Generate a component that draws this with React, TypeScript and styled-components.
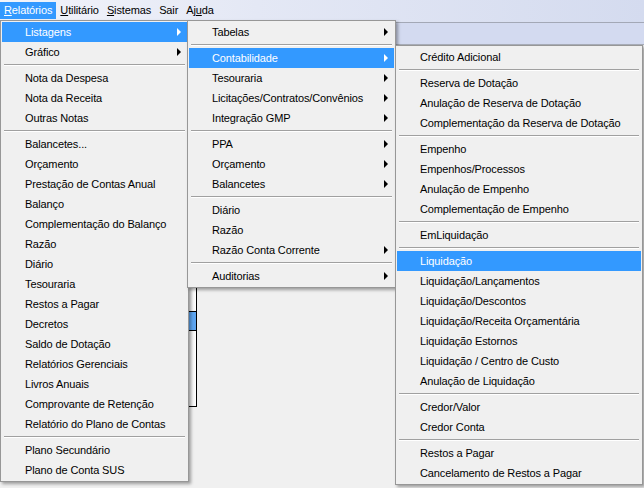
import styled, { createGlobalStyle } from 'styled-components';

const GlobalStyle = createGlobalStyle`
  html, body { margin: 0; padding: 0; }
  body {
    width: 644px;
    height: 488px;
    overflow: hidden;
    background: #f0f0f0;
    font-family: "Liberation Sans", Arial, sans-serif;
    font-size: 11px;
    letter-spacing: -0.12px;
    color: #000;
  }
`;

type Entry = { label: string; sub?: boolean; active?: boolean } | 'sep';

const mainMenu: Entry[] = [
  { label: 'Listagens', sub: true, active: true },
  { label: 'Gráfico', sub: true },
  'sep',
  { label: 'Nota da Despesa' },
  { label: 'Nota da Receita' },
  { label: 'Outras Notas' },
  'sep',
  { label: 'Balancetes...' },
  { label: 'Orçamento' },
  { label: 'Prestação de Contas Anual' },
  { label: 'Balanço' },
  { label: 'Complementação do Balanço' },
  { label: 'Razão' },
  { label: 'Diário' },
  { label: 'Tesouraria' },
  { label: 'Restos a Pagar' },
  { label: 'Decretos' },
  { label: 'Saldo de Dotação' },
  { label: 'Relatórios Gerenciais' },
  { label: 'Livros Anuais' },
  { label: 'Comprovante de Retenção' },
  { label: 'Relatório do Plano de Contas' },
  'sep',
  { label: 'Plano Secundário' },
  { label: 'Plano de Conta SUS' },
];

const listagens: Entry[] = [
  { label: 'Tabelas', sub: true },
  'sep',
  { label: 'Contabilidade', sub: true, active: true },
  { label: 'Tesouraria', sub: true },
  { label: 'Licitações/Contratos/Convênios', sub: true },
  { label: 'Integração GMP', sub: true },
  'sep',
  { label: 'PPA', sub: true },
  { label: 'Orçamento', sub: true },
  { label: 'Balancetes', sub: true },
  'sep',
  { label: 'Diário' },
  { label: 'Razão' },
  { label: 'Razão Conta Corrente', sub: true },
  'sep',
  { label: 'Auditorias', sub: true },
];

const contabilidade: Entry[] = [
  { label: 'Crédito Adicional' },
  'sep',
  { label: 'Reserva de Dotação' },
  { label: 'Anulação de Reserva de Dotação' },
  { label: 'Complementação da Reserva de Dotação' },
  'sep',
  { label: 'Empenho' },
  { label: 'Empenhos/Processos' },
  { label: 'Anulação de Empenho' },
  { label: 'Complementação de Empenho' },
  'sep',
  { label: 'EmLiquidação' },
  'sep',
  { label: 'Liquidação', active: true },
  { label: 'Liquidação/Lançamentos' },
  { label: 'Liquidação/Descontos' },
  { label: 'Liquidação/Receita Orçamentária' },
  { label: 'Liquidação Estornos' },
  { label: 'Liquidação / Centro de Custo' },
  { label: 'Anulação de Liquidação' },
  'sep',
  { label: 'Credor/Valor' },
  { label: 'Credor Conta' },
  'sep',
  { label: 'Restos a Pagar' },
  { label: 'Cancelamento de Restos a Pagar' },
];

const Window = styled.div`
  position: relative;
  width: 644px;
  height: 488px;
  display: flex;
  flex-direction: column;
`;

const MenuBar = styled.div`
  height: 23px;
  display: flex;
  align-items: flex-start;
  padding-top: 2px;
  box-sizing: border-box;
  background: linear-gradient(to right, #f2f4fa 0%, #e4e8f5 40%, #d4dbef 100%);
  border-bottom: 1px solid #a3a8b6;
`;

const BarItem = styled.div<{ $open?: boolean }>`
  height: 17px;
  line-height: 17px;
  padding: 0 4px;
  background: ${({ $open }) => ($open ? '#3399ff' : 'transparent')};
  color: ${({ $open }) => ($open ? '#fff' : '#000')};
`;

const Key = styled.span`
  text-decoration: underline;
`;

const Band = styled.div`
  height: 21px;
  background: #d3daf0;
  border-bottom: 1px solid #a9aeb9;
`;

const Content = styled.div`
  flex: 1;
  background: #f0f0f0;
  padding: 242px 0 0 189px;
`;

const ScrollStrip = styled.div`
  width: 8px;
  height: 120px;
  background: linear-gradient(to right, #e6e6e6, #ffffff);
  border-right: 1px solid #000;
  border-bottom: 1px solid #000;
  padding-top: 24px;
  box-sizing: border-box;
`;

const Thumb = styled.div`
  height: 20px;
  background: #5ea6f2;
  border-top: 1px solid #000;
  border-bottom: 1px solid #000;
  box-sizing: border-box;
`;

const Popup = styled.div<{ $left: number; $top: number; $width: number }>`
  position: absolute;
  left: ${({ $left }) => $left}px;
  top: ${({ $top }) => $top}px;
  width: ${({ $width }) => $width}px;
  box-sizing: border-box;
  background: #f0f0f0;
  border: 1px solid #979797;
  padding: 1px;
  box-shadow: 2px 2px 3px rgba(0, 0, 0, 0.35);
`;

const Row = styled.div<{ $active?: boolean }>`
  height: 20px;
  display: flex;
  align-items: center;
  padding: 0 6px 0 23px;
  background: ${({ $active }) => ($active ? '#3399ff' : 'transparent')};
  color: ${({ $active }) => ($active ? '#fff' : '#000')};
  white-space: nowrap;
`;

const Label = styled.span`
  flex: 1;
`;

const Arrow = styled.span`
  width: 0;
  height: 0;
  border-left: 4px solid currentColor;
  border-top: 4px solid transparent;
  border-bottom: 4px solid transparent;
`;

const Separator = styled.div`
  height: 6px;
  display: flex;
  align-items: center;
  padding: 0 2px;
  &::before {
    content: '';
    flex: 1;
    border-top: 1px solid #a0a0a0;
    border-bottom: 1px solid #ffffff;
  }
`;

function Menu({ items, left, top, width }: { items: Entry[]; left: number; top: number; width: number }) {
  return (
    <Popup $left={left} $top={top} $width={width}>
      {items.map((it, i) =>
        it === 'sep' ? (
          <Separator key={i} />
        ) : (
          <Row key={i} $active={it.active}>
            <Label>{it.label}</Label>
            {it.sub && <Arrow />}
          </Row>
        )
      )}
    </Popup>
  );
}

export default function App() {
  return (
    <>
      <GlobalStyle />
      <Window>
        <MenuBar>
          <BarItem $open><Key>R</Key>elatórios</BarItem>
          <BarItem><Key>U</Key>tilitário</BarItem>
          <BarItem><Key>S</Key>istemas</BarItem>
          <BarItem>Sair</BarItem>
          <BarItem>Aj<Key>u</Key>da</BarItem>
        </MenuBar>
        <Band />
        <Content>
          <ScrollStrip>
            <Thumb />
          </ScrollStrip>
        </Content>
        <Menu items={mainMenu} left={0} top={20} width={189} />
        <Menu items={listagens} left={187} top={20} width={209} />
        <Menu items={contabilidade} left={395} top={45} width={248} />
      </Window>
    </>
  );
}
